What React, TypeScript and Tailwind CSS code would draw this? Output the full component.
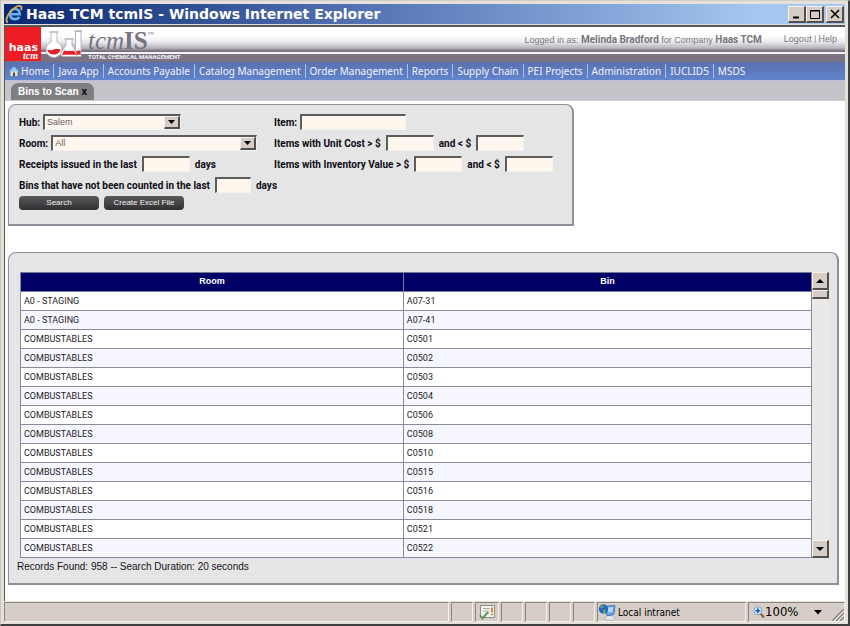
import React from "react";

const NAV = [
  "Home",
  "Java App",
  "Accounts Payable",
  "Catalog Management",
  "Order Management",
  "Reports",
  "Supply Chain",
  "PEI Projects",
  "Administration",
  "IUCLID5",
  "MSDS",
];

const ROWS: [string, string][] = [
  ["A0 - STAGING", "A07-31"],
  ["A0 - STAGING", "A07-41"],
  ["COMBUSTABLES", "C0501"],
  ["COMBUSTABLES", "C0502"],
  ["COMBUSTABLES", "C0503"],
  ["COMBUSTABLES", "C0504"],
  ["COMBUSTABLES", "C0506"],
  ["COMBUSTABLES", "C0508"],
  ["COMBUSTABLES", "C0510"],
  ["COMBUSTABLES", "C0515"],
  ["COMBUSTABLES", "C0516"],
  ["COMBUSTABLES", "C0518"],
  ["COMBUSTABLES", "C0521"],
  ["COMBUSTABLES", "C0522"],
];

const SUNKEN =
  "bg-[#fff7ee] border-t-2 border-l-2 border-b border-r border-t-[#5c5c5c] border-l-[#5c5c5c] border-b-[#f4f2f0] border-r-[#f4f2f0]";
const RAISED =
  "bg-[#d6cec6] border-t border-l border-b-2 border-r-2 border-t-[#f4f1ee] border-l-[#f4f1ee] border-b-[#55504c] border-r-[#55504c]";

function IeLogo() {
  return (
    <svg width="20" height="20" viewBox="0 0 20 20" className="shrink-0" aria-hidden="true">
      <path
        d="M6.500 10.300h9.300C15.600 6.800 13.600 5 11 5c-2.900 0-4.900 2-4.900 5.200 0 3 2 4.900 4.900 4.900 2 0 3.500-.8 4.300-2.300"
        fill="none"
        stroke="#62b4f2"
        strokeWidth="2.600"
      />
      <path
        d="M4 18.200C1.600 18 2 13.700 5.400 9 9 4 14.600.8 16.800 2.200c1.100.8.8 2.300.1 3.900"
        fill="none"
        stroke="#d9a35a"
        strokeWidth="1.900"
      />
    </svg>
  );
}

function CaptionButton({ label, children }: { label: string; children: React.ReactNode }) {
  return (
    <button type="button" aria-label={label} className={`flex h-[17px] w-[18px] items-center justify-center ${RAISED}`}>
      <svg width="12" height="12" viewBox="0 0 12 12" fill="none" stroke="#000" aria-hidden="true">
        {children}
      </svg>
    </button>
  );
}

function TitleBar() {
  return (
    <div className="flex h-5 items-center bg-linear-to-r from-[#0b2870] via-[#5573b4] via-43% to-[#a6c8f0] to-90% pr-px">
      <IeLogo />
      <h1 className="ml-[2px] flex-1 font-['DejaVu_Sans',sans-serif] text-[14px] leading-5 font-bold whitespace-nowrap text-white">
        Haas TCM tcmIS - Windows Internet Explorer
      </h1>
      <div className="flex">
        <CaptionButton label="Minimize">
          <path d="M2 9.500h6" strokeWidth="2" />
        </CaptionButton>
        <CaptionButton label="Maximize">
          <path d="M1.500 2.500h9v8h-9zM1.500 3h9" />
        </CaptionButton>
        <div className="w-[2px]" />
        <CaptionButton label="Close">
          <path d="M2 2l8 8M10 2l-8 8" strokeWidth="1.600" />
        </CaptionButton>
      </div>
    </div>
  );
}

function Flasks() {
  return (
    <svg width="41" height="31" viewBox="0 0 41 31" className="shrink-0" aria-hidden="true">
      <g fill="#fff" stroke="#b7b5bc" strokeWidth="1">
        <path d="M34.500 4.500h5.500v25h-5.500z" />
        <path d="M10 5.500v9.500a8 8 0 1 0 6 0V5.500" />
        <path d="M25 12.500v5.500l-5 8q-1 3.500 2 3.500h12q3 0 2-3.500L31 18v-5.500" />
      </g>
      <path d="M8.500 5h9M23.500 12h9M33.500 4h7.500" stroke="#b7b5bc" strokeWidth="1.400" />
      <path d="M6 22.500q3.500 1.500 7 0t6.500 0q-1.300 5-6.700 5-5 0-6.800-5z" fill="#e5202a" />
      <path d="M23 23.500q5 1 10 0l2.500 4.200H21z" fill="#e5202a" />
      <path d="M35.500 23.500h4v4.200h-4z" fill="#e5202a" />
    </svg>
  );
}

function Header() {
  return (
    <header className="flex h-[35px] bg-[linear-gradient(to_bottom,#fff_0px,#fff_9px,#e9e9ee_15px,#b8b5be_21px,#77717f_24px,#77717f_25px,#f5f5f7_25px,#f5f5f7_27px,#7b7383_27px,#7b7383_35px)]">
      <div className="flex h-[34px] w-9 shrink-0 flex-col items-end justify-end bg-[#ee1c23] pr-[3px] pb-px text-white">
        <span className="font-['DejaVu_Sans',sans-serif] text-[11px] leading-[8px] font-bold">haas</span>
        <span className="font-['Liberation_Serif',serif] text-[10px] leading-[8px] font-bold italic">tcm</span>
      </div>
      <Flasks />
      <div className="ml-[6px] flex flex-1 flex-col">
        <div className="flex h-[26px] items-start font-['Liberation_Serif',serif] text-[25px] leading-[27px] text-[#77747e]">
          <span className="italic">tcm</span>
          <span className="font-bold">IS</span>
          <span className="text-[6px] leading-[14px]">™</span>
        </div>
        <span className="font-['Roboto',sans-serif] text-[6px] leading-[8px] font-bold text-[#f3f1f5]">
          TOTAL CHEMICAL MANAGEMENT
        </span>
      </div>
      <div className="flex h-[25px] items-center pr-2 font-['Roboto',sans-serif] text-[9px] whitespace-nowrap text-[#77777c]">
        <p className="font-['Liberation_Sans',sans-serif]">
          Logged in as: <b className="font-['Roboto',sans-serif] text-[10px]">Melinda Bradford</b> for Company{" "}
          <b className="font-['Roboto',sans-serif] text-[10px]">Haas TCM</b>
        </p>
        <p className="ml-[22px]">
          <a href="#logout">Logout</a> | <a href="#help">Help</a>
        </p>
      </div>
    </header>
  );
}

function NavBar() {
  return (
    <nav className="flex h-[19px] items-center border-b border-[#c3b9e0] bg-linear-to-b from-[#5a70b0] to-[#6184cc] pl-1 font-['Noto_Sans',sans-serif] text-[10px] whitespace-nowrap text-[#f1f4fb]">
      <svg width="10" height="10" viewBox="0 0 10 10" className="mr-[2px] shrink-0" aria-hidden="true">
        <path d="M1.500 5h7v5h-7z" fill="#f2e3b0" />
        <path d="M0 5.500 5 .5l5 5z" fill="#8fd0f0" />
        <path d="M4 6.500h2V10H4z" fill="#2c4f88" />
      </svg>
      {NAV.map((item, i) => (
        <a
          key={item}
          href="#nav"
          className={`leading-[14px] ${i === 0 ? "pr-1" : "border-l border-[#9fc4ee] px-1"}`}
        >
          {item}
        </a>
      ))}
    </nav>
  );
}

function TabBar() {
  return (
    <div className="flex h-[19px] items-end bg-[#c6c4cb] pl-[6px]">
      <div className="flex h-[17px] items-center gap-[3px] rounded-t-[7px] bg-[#7f7f82] px-[7px] font-['Liberation_Sans',sans-serif] text-[10px] font-bold text-white">
        Bins to Scan
        <button type="button" aria-label="Close tab" className="leading-3 text-black">
          x
        </button>
      </div>
    </div>
  );
}

function Drop({ id, value, className }: { id: string; value: string; className: string }) {
  return (
    <div className={`grid h-4 ${SUNKEN} ${className}`}>
      <select
        id={id}
        defaultValue={value}
        className="col-start-1 row-start-1 w-full appearance-none pl-[2px] font-['Liberation_Sans',sans-serif] text-[9px] leading-[13px] font-normal text-[#66625e]"
      >
        <option>{value}</option>
      </select>
      <span
        className={`pointer-events-none col-start-1 row-start-1 flex w-4 items-center justify-center justify-self-end ${RAISED}`}
      >
        <svg width="7" height="4" viewBox="0 0 7 4" aria-hidden="true">
          <path d="M0 0h7L3.500 4z" />
        </svg>
      </span>
    </div>
  );
}

function Field({ id, label, width }: { id: string; label: string; width: string }) {
  return (
    <>
      <label htmlFor={id}>{label}</label>
      <input id={id} type="text" className={`h-4 ${SUNKEN} ${width}`} />
    </>
  );
}

const LINE = "flex h-4 items-end gap-[3px] leading-[14px]";
const WIDE_LINE = "flex h-4 items-end gap-[5px] leading-[14px]";

function ActionButton({ children }: { children: React.ReactNode }) {
  return (
    <button
      type="button"
      className="h-[14px] w-20 rounded-[4px] bg-linear-to-b from-[#5a5a5c] to-[#303032] text-[8px] leading-[14px] font-normal text-[#f0f0f0]"
    >
      {children}
    </button>
  );
}

function SearchPanel() {
  return (
    <form
      onSubmit={(e) => e.preventDefault()}
      className="h-[122px] w-[566px] max-w-full rounded-t-[8px] border border-r-2 border-b-2 border-[#90909c] bg-[#e5e5e5] pt-[9px] pl-[10px] font-['Roboto',sans-serif] text-[10px] font-bold whitespace-nowrap text-[#0c0c14]"
    >
      <div className="flex">
        <div className="flex w-[255px] flex-col gap-[5px]">
          <div className={LINE}>
            <label htmlFor="hub">Hub:</label>
            <Drop id="hub" value="Salem" className="w-[138px]" />
          </div>
          <div className={LINE}>
            <label htmlFor="room">Room:</label>
            <Drop id="room" value="All" className="w-[206px]" />
          </div>
          <div className={WIDE_LINE}>
            <Field id="receipts" label="Receipts issued in the last" width="w-12" />
            <span>days</span>
          </div>
          <div className={WIDE_LINE}>
            <Field id="counted" label="Bins that have not been counted in the last" width="w-9" />
            <span>days</span>
          </div>
        </div>
        <div className="flex flex-col gap-[5px]">
          <div className={LINE}>
            <Field id="item" label="Item:" width="w-[106px]" />
          </div>
          <div className={WIDE_LINE}>
            <Field id="cost-min" label="Items with Unit Cost > $" width="w-12" />
            <Field id="cost-max" label="and < $" width="w-12" />
          </div>
          <div className={WIDE_LINE}>
            <Field id="value-min" label="Items with Inventory Value > $" width="w-12" />
            <Field id="value-max" label="and < $" width="w-12" />
          </div>
        </div>
      </div>
      <div className="mt-[3px] flex gap-[5px] font-['Liberation_Sans',sans-serif]">
        <ActionButton>Search</ActionButton>
        <ActionButton>Create Excel File</ActionButton>
      </div>
    </form>
  );
}

function ScrollBar() {
  return (
    <div className="flex w-[17px] shrink-0 flex-col bg-[#eae9e7]">
      <button type="button" aria-label="Scroll up" className={`flex h-[18px] items-center justify-center ${RAISED}`}>
        <svg width="8" height="4" viewBox="0 0 8 4" aria-hidden="true">
          <path d="M0 4h8L4 0z" />
        </svg>
      </button>
      <div className={`h-[9px] ${RAISED}`} />
      <div className="flex-1" />
      <button type="button" aria-label="Scroll down" className={`flex h-[18px] items-center justify-center ${RAISED}`}>
        <svg width="8" height="4" viewBox="0 0 8 4" aria-hidden="true">
          <path d="M0 0h8L4 4z" />
        </svg>
      </button>
    </div>
  );
}

function ResultsPanel() {
  return (
    <section className="mt-[26px] mr-[6px] rounded-t-[8px] border border-r-2 border-b-2 border-[#90909c] bg-[#e5e5e5] pt-[19px] pr-2 pb-[9px]">
      <div className="flex pl-[11px]">
        <table className="flex-1 table-fixed border-separate border-spacing-0 border-l border-[#8a8a9c] text-left font-['Roboto',sans-serif] text-[9px] text-[#1c1c24]">
          <colgroup>
            <col className="w-[48.4%]" />
            <col className="w-[51.6%]" />
          </colgroup>
          <thead>
            <tr className="h-5 bg-[#000066] text-center font-['Liberation_Sans',sans-serif] text-white">
              <th className="border-t border-r border-b border-[#77779a] p-0">Room</th>
              <th className="border-t border-r border-b border-[#77779a] p-0">Bin</th>
            </tr>
          </thead>
          <tbody>
            {ROWS.map(([room, bin]) => (
              <tr key={bin} className="h-[19px] bg-white even:bg-[#f6f6ff]">
                <td className="border-r border-b border-[#8a8a9c] pt-px pb-0 pl-[3px]">{room}</td>
                <td className="border-r border-b border-[#8a8a9c] pt-px pb-0 pl-[3px]">{bin}</td>
              </tr>
            ))}
          </tbody>
        </table>
        <ScrollBar />
      </div>
      <p className="mt-[2px] pl-2 font-['Liberation_Sans',sans-serif] text-[10px] leading-[14px] text-[#14141c]">
        Records Found: 958 -- Search Duration: 20 seconds
      </p>
    </section>
  );
}

const CELL =
  "flex items-center border border-t-[#8c8680] border-l-[#8c8680] border-r-[#f3efeb] border-b-[#f3efeb]";

function StatusBar() {
  return (
    <footer className="mt-px flex h-5 gap-[2px] bg-[#d6cec6] font-['DejaVu_Sans_Condensed','DejaVu_Sans',sans-serif] text-black">
      <div className={`flex-1 ${CELL}`} />
      <div className={`w-[22px] ${CELL}`} />
      <div className={`w-[24px] justify-center ${CELL}`}>
        <svg width="17" height="16" viewBox="0 0 17 16" className="shrink-0" aria-hidden="true">
          <path d="M1.500 1.500h14v12h-14z" fill="#f3f2ee" stroke="#8b8b88" />
          <path d="M4 4.500h7M4 7h6M6 9.500h4" stroke="#a9a9a9" />
          <path d="M13 3.500v5M13 9.700v1.600" stroke="#d67a1e" strokeWidth="1.800" />
          <path d="M1 11l2.500 3.500L9 8" fill="none" stroke="#5f9a5c" strokeWidth="2" />
        </svg>
      </div>
      <div className={`w-[22px] ${CELL}`} />
      <div className={`w-[22px] ${CELL}`} />
      <div className={`w-[22px] ${CELL}`} />
      <div className={`w-[22px] ${CELL}`} />
      <div className={`w-[149px] gap-[2px] text-[10px] ${CELL}`}>
        <svg width="18" height="18" viewBox="0 0 18 18" className="shrink-0" aria-hidden="true">
          <ellipse cx="12" cy="15" rx="4.500" ry="2.300" fill="#e3e6f2" stroke="#9ba3bd" strokeWidth=".6" />
          <path d="M6 3.500 17 2.500 16 11q-3 2-7 1.500z" fill="#6aa7ea" stroke="#3a66ad" strokeWidth=".8" />
          <path d="M9 4.500l6-.5-.7 5-4 .5z" fill="#b5dbfa" />
          <circle cx="5.500" cy="6" r="4.700" fill="#2a63c4" />
          <path d="M2 4q2-2.500 4-1.500l-1 2-2 1zM5 7l3-.5-1 3-2 .5z" fill="#5cb552" />
        </svg>
        Local intranet
      </div>
      <div className={`w-[97px] pl-1 text-[13px] ${CELL}`}>
        <svg width="12" height="13" viewBox="0 0 12 13" className="shrink-0" aria-hidden="true">
          <path d="M7 7l4 4.500" stroke="#8b5a3a" strokeWidth="2" />
          <circle cx="4.800" cy="4.800" r="4" fill="#d9ebfb" stroke="#7fa4cf" />
          <path d="M2.300 4.800h5M4.800 2.300v5" stroke="#1f56b8" strokeWidth="1.500" />
        </svg>
        <span className="flex-1">100%</span>
        <svg width="8" height="5" viewBox="0 0 8 5" className="mr-[10px]" aria-hidden="true">
          <path d="M0 0h8L4 4.500z" />
        </svg>
        <svg width="12" height="12" viewBox="0 0 12 12" className="self-end" aria-hidden="true">
          <path d="M0 12 12 0M4 12l8-8M8 12l4-4" stroke="#8c8680" strokeWidth="1.500" />
          <path d="M1.500 12.500 12.500 1.500M5.500 12.500l7-7" stroke="#fff" strokeWidth=".8" />
        </svg>
      </div>
    </footer>
  );
}

export default function App() {
  return (
    <div className="flex min-h-screen flex-col border-t border-r-2 border-b-2 border-l border-t-[#d6cec6] border-r-[#404040] border-b-[#404040] border-l-[#c9c3bc] bg-[#e4e0da] pt-[3px] pr-[3px] pb-[2px] pl-[3px]">
      <TitleBar />
      <div className="mt-px flex flex-1 flex-col border-t-2 border-l border-[#58585a] bg-white">
        <Header />
        <NavBar />
        <TabBar />
        <main className="flex-1 border-t border-[#cfcfcf] pt-[3px] pl-[3px]">
          <SearchPanel />
          <ResultsPanel />
        </main>
      </div>
      <StatusBar />
    </div>
  );
}
